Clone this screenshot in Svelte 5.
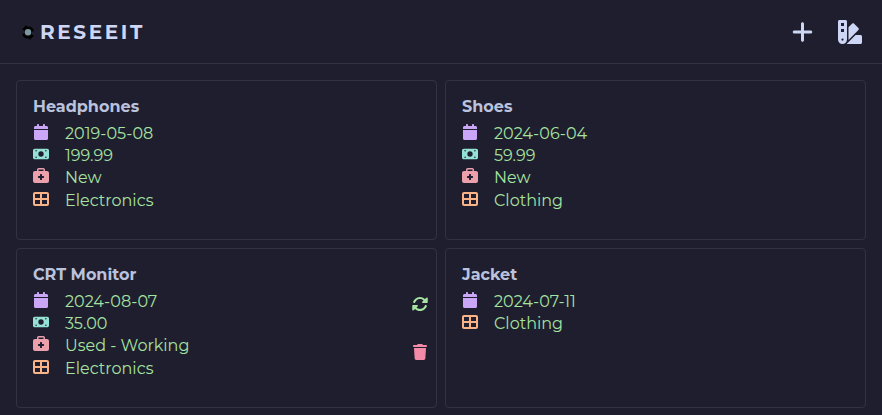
<script>
  const icons = {
    date: { box: '0 0 448 512', color: '#cba6f7', d: 'M96 32V64H48C21.5 64 0 85.5 0 112v48H448V112c0-26.5-21.5-48-48-48H352V32c0-17.7-14.3-32-32-32s-32 14.3-32 32V64H160V32c0-17.7-14.3-32-32-32S96 14.3 96 32zM448 192H0V464c0 26.5 21.5 48 48 48H400c26.5 0 48-21.5 48-48V192z' },
    price: { box: '0 0 576 512', color: '#94e2d5', d: 'M64 64C28.7 64 0 92.7 0 128V384c0 35.3 28.7 64 64 64H512c35.3 0 64-28.7 64-64V128c0-35.3-28.7-64-64-64H64zM288 160a96 96 0 1 1 0 192 96 96 0 1 1 0-192zM112 112a28 28 0 1 1 0 56 28 28 0 0 1 0-56zM464 112a28 28 0 1 1 0 56 28 28 0 0 1 0-56zM112 344a28 28 0 1 1 0 56 28 28 0 0 1 0-56zM464 344a28 28 0 1 1 0 56 28 28 0 0 1 0-56z' },
    condition: { box: '0 0 512 512', color: '#eba0ac', d: 'M184 48H328c4.4 0 8 3.6 8 8V96H176V56c0-4.4 3.6-8 8-8zM128 56V96H64C28.7 96 0 124.7 0 160V416c0 35.3 28.7 64 64 64H448c35.3 0 64-28.7 64-64V160c0-35.3-28.7-64-64-64H384V56c0-30.9-25.1-56-56-56H184c-30.9 0-56 25.1-56 56zM224 208c0-8.8 7.2-16 16-16h32c8.8 0 16 7.2 16 16v48h48c8.8 0 16 7.2 16 16v32c0 8.8-7.2 16-16 16H288v48c0 8.8-7.2 16-16 16H240c-8.8 0-16-7.2-16-16V320H176c-8.8 0-16-7.2-16-16V272c0-8.8 7.2-16 16-16h48V208z' },
    category: { box: '0 0 512 512', color: '#fab387', d: 'M448 96V224H288V96H448zm0 192V416H288V288H448zM224 224H64V96H224V224zM64 288H224V416H64V288zM64 32C28.7 32 0 60.7 0 96V416c0 35.3 28.7 64 64 64H448c35.3 0 64-28.7 64-64V96c0-35.3-28.7-64-64-64H64z' }
  };
  const items = [
    { name: 'Headphones', rows: [['date', '2019-05-08'], ['price', '199.99'], ['condition', 'New'], ['category', 'Electronics']] },
    { name: 'Shoes', rows: [['date', '2024-06-04'], ['price', '59.99'], ['condition', 'New'], ['category', 'Clothing']] },
    { name: 'CRT Monitor', active: true, rows: [['date', '2024-08-07'], ['price', '35.00'], ['condition', 'Used - Working'], ['category', 'Electronics']] },
    { name: 'Jacket', rows: [['date', '2024-07-11'], ['category', 'Clothing']] }
  ];
</script>

<div class="app">
  <header>
    <div class="brand">
      <svg class="logo" viewBox="0 0 12 15"><path d="M0 4.5 4.3 0 5 1.600C9 1.200 11.500 3 12 6.500L9 6C8 4 4 4 3 5.500ZM12 10.500 7.700 15 7 13.400C3 13.800 .5 12 0 8.500L3 9C4 11 8 11 9 9.500Z" fill="#000" /><circle cx="6" cy="7.500" r="3.900" fill="#050608" /><circle cx="6" cy="7.300" r="3.200" fill="#7d97a0" /></svg>
      <h1>RESEEIT</h1>
    </div>
    <nav>
      <button aria-label="Add"><svg class="plus" viewBox="0 0 448 512"><path d="M256 80c0-17.7-14.3-32-32-32s-32 14.3-32 32V224H48c-17.7 0-32 14.3-32 32s14.3 32 32 32H192V432c0 17.7 14.3 32 32 32s32-14.3 32-32V288H400c17.7 0 32-14.3 32-32s-14.3-32-32-32H256V80z" /></svg></button>
      <button aria-label="Theme"><svg class="swatch" viewBox="0 0 512 512"><path fill-rule="evenodd" d="M0 32C0 14.3 14.3 0 32 0H160c17.7 0 32 14.3 32 32V416c0 53-43 96-96 96s-96-43-96-96V32zM223.6 425.9c.3-3.3 .4-6.6 .4-9.9V154l75.4-75.4c12.5-12.5 32.8-12.5 45.3 0l90.5 90.5c12.5 12.5 12.5 32.8 0 45.3L223.6 425.9zM182.8 512l192-192H480c17.7 0 32 14.3 32 32V480c0 17.7-14.3 32-32 32H182.8zM128 64H64v64h64V64zM64 192v64h64V192H64zM96 440a24 24 0 1 0 0-48 24 24 0 1 0 0 48z" /></svg></button>
    </nav>
  </header>
  <main>
    {#each items as item}
      <article>
        <div class="info">
          <h2>{item.name}</h2>
          <ul>
            {#each item.rows as [kind, value]}
              <li>
                <svg class="icon" viewBox={icons[kind].box} fill={icons[kind].color}><path fill-rule="evenodd" d={icons[kind].d} /></svg>
                <span>{value}</span>
              </li>
            {/each}
          </ul>
        </div>
        {#if item.active}
          <div class="actions">
            <button aria-label="Refresh"><svg viewBox="0 0 512 512" fill="#a6e3a1"><path d="M142.900 142.900c62.200-62.200 162.700-62.500 225.300-1L327 183c-6.900 6.900-8.900 17.200-5.200 26.200s12.500 14.800 22.200 14.800H480c13.300 0 24-10.700 24-24V72c0-9.700-5.800-18.500-14.800-22.200s-19.300-1.700-26.200 5.200L413.400 96.600c-87.600-86.500-228.700-86.200-315.800 1C73.200 122 45.600 150.700 34.800 181.200c-5.900 16.700 12.900 34.900 29.500 40.800s34.900-2.900 40.800-19.500c7.700-21.800 20.200-42.300 37.800-59.600zM8 312V440c0 9.700 5.800 18.500 14.800 22.200s19.300 1.700 26.200-5.200l49.600-41.600c87.600 86.500 228.700 86.200 315.800-1c24.400-24.400 52.100-53.100 62.900-83.700c5.900-16.700-12.900-34.900-29.500-40.800s-34.900 2.900-40.800 19.500c-7.700 21.800-20.200 42.300-37.800 59.800c-62.200 62.200-162.700 62.500-225.300 1L185 329c6.900-6.900 8.900-17.200 5.200-26.200s-12.500-14.800-22.200-14.800H32c-13.300 0-24 10.700-24 24z" /></svg></button>
            <button aria-label="Delete"><svg viewBox="0 0 448 512" fill="#f38ba8"><path d="M135.2 17.7L128 32H32C14.3 32 0 46.3 0 64S14.3 96 32 96H416c17.7 0 32-14.3 32-32s-14.3-32-32-32H320l-7.2-14.3C307.4 6.8 296.3 0 284.2 0H163.8c-12.1 0-23.2 6.8-28.6 17.7zM416 128H32L53.2 467c1.6 25.3 22.6 45 47.9 45H346.9c25.3 0 46.3-19.7 47.9-45L416 128z" /></svg></button>
          </div>
        {/if}
      </article>
    {/each}
  </main>
</div>

<style>
  :global(body) { background: #1e1e2e; }
  .app {
    box-sizing: border-box;
    height: 415px;
    overflow: hidden;
    background: #1e1e2e;
    color: #cdd6f4;
    font-family: Montserrat, Inter, sans-serif;
  }
  header {
    box-sizing: border-box;
    height: 64px;
    display: flex;
    align-items: center;
    justify-content: space-between;
    padding: 0 20px 0 22px;
    border-bottom: 1px solid #313244;
  }
  .brand { display: flex; align-items: center; gap: 6px; }
  .logo { width: 12px; height: 15px; margin-top: 1px; }
  h1 { margin: 2px 0 0; font-size: 20px; line-height: 25px; font-weight: 700; letter-spacing: 2.6px; }
  nav { display: flex; align-items: center; gap: 25px; }
  button { display: flex; padding: 0; border: 0; background: none; }
  nav svg { height: 24px; fill: #cdd6f4; }
  .plus { width: 21px; }
  .swatch { width: 24px; }
  main {
    display: grid;
    grid-template-columns: 1fr 1fr;
    grid-auto-rows: 160px;
    gap: 8px;
    padding: 16px;
  }
  article {
    box-sizing: border-box;
    display: flex;
    justify-content: space-between;
    padding: 16px 8px 16px 16px;
    border: 1px solid #313244;
    border-radius: 4px;
  }
  h2 { margin: 0 0 5.5px; font-size: 16px; line-height: 19px; font-weight: 700; color: #bac2de; }
  ul { margin: 0; padding: 0; list-style: none; }
  li {
    display: flex;
    gap: 16px;
    height: 22.4px;
    font-size: 16px;
    line-height: 24px;
    color: #a6e3a1;
    white-space: nowrap;
  }
  .icon { width: 16px; height: 16px; margin-top: 2px; }
  .actions { display: flex; flex-direction: column; justify-content: center; gap: 32px; }
  .actions svg { width: 16px; height: 16px; }
</style>
